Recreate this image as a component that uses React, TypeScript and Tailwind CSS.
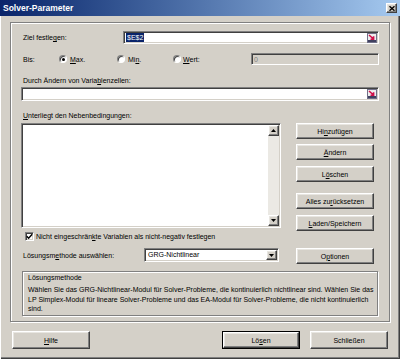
import React from "react";

const sunken =
  "border border-t-[#808080] border-l-[#808080] border-b-white border-r-white shadow-[inset_1px_1px_0_#404040,inset_-1px_-1px_0_#d4d0c8]";
const raised =
  "border border-t-white border-l-white border-b-[#404040] border-r-[#404040] shadow-[inset_-1px_-1px_0_#808080,inset_1px_1px_0_#e8e6e1]";

function RefIcon() {
  return (
    <svg width="10" height="10" viewBox="0 0 10 10" className="shrink-0">
      <rect x="0.5" y="0.5" width="9" height="9" fill="#eeeeee" stroke="#707088" />
      <rect x="1" y="7" width="8" height="2" fill="#404060" />
      <path d="M2 2 L6.5 6 M3.5 6.2 L6.6 6.2 L6.6 3.2" stroke="#d0104a" strokeWidth="1.6" fill="none" />
    </svg>
  );
}

function Radio({ on }: { on?: boolean }) {
  return (
    <div className="w-[8px] h-[8px] rounded-full bg-white border border-t-[#808080] border-l-[#808080] border-b-white border-r-white shadow-[inset_1px_1px_0_#404040] flex items-center justify-center shrink-0">
      {on && <div className="w-[3px] h-[3px] rounded-full bg-black" />}
    </div>
  );
}

function Btn({ children, cls }: { children: React.ReactNode; cls: string }) {
  return (
    <div className={`${cls} bg-[#d4d0c8] ${raised} flex items-center justify-center leading-[9px]`}>
      {children}
    </div>
  );
}

function Arrow({ up }: { up?: boolean }) {
  return (
    <svg width="5" height="3" viewBox="0 0 5 3">
      <path d={up ? "M0 3 L2.5 0 L5 3 Z" : "M0 0 L5 0 L2.5 3 Z"} fill="#000" />
    </svg>
  );
}

export default function App() {
  return (
    <div className="w-[400px] h-[359px] bg-[#d4d0c8] flex flex-col overflow-hidden text-[7px] text-black font-['Liberation_Sans',Arial,sans-serif] shadow-[inset_1px_0_0_#fff,inset_-1px_-1px_0_#404040,inset_-2px_-2px_0_#808080]">
      {/* title bar */}
      <div className="h-[16px] shrink-0 flex items-center justify-between pl-[3px] pr-[3px] bg-linear-to-r from-[#0a246a] to-[#a6caf0]">
        <span className="text-white font-bold text-[8.5px] leading-[10px]">Solver-Parameter</span>
        <div className={`w-[11px] h-[10px] bg-[#d4d0c8] ${raised} flex items-center justify-center`}>
          <svg width="6" height="5" viewBox="0 0 6 5">
            <path d="M0.5 0.3 L5.5 4.7 M5.5 0.3 L0.5 4.7" stroke="#000" strokeWidth="1.4" />
          </svg>
        </div>
      </div>

      <div className="flex-1 flex flex-col px-[10px] pt-[6px]">
        {/* main frame */}
        <div className="h-[300px] shrink-0 border border-[#808080] shadow-[inset_1px_1px_0_#fff,1px_1px_0_#fff] flex flex-col px-[10px]">
          {/* Ziel */}
          <div className="mt-[8px] h-[13px] flex items-center">
            <span className="w-[102px] pl-[2px] leading-[9px]">
              Ziel festle<u>g</u>en:
            </span>
            <div className={`flex-1 h-[13px] bg-white ${sunken} flex items-center justify-between pl-[2px] pr-[1px]`}>
              <span className="bg-[#0a246a] text-white leading-[9px] px-[1px]">$E$2</span>
              <RefIcon />
            </div>
          </div>

          {/* Bis */}
          <div className="mt-[9px] h-[12px] flex items-center">
            <span className="w-[38px] pl-[2px] leading-[9px]">Bis:</span>
            <div className="w-[58px] flex items-center gap-[3px]">
              <Radio on />
              <span className="leading-[9px]">
                <u>M</u>ax.
              </span>
            </div>
            <div className="w-[56px] flex items-center gap-[3px]">
              <Radio />
              <span className="leading-[9px]">
                Mi<u>n</u>.
              </span>
            </div>
            <div className="w-[78px] flex items-center gap-[2px]">
              <Radio />
              <span className="leading-[9px]">
                <u>W</u>ert:
              </span>
            </div>
            <div className={`flex-1 h-[12px] bg-[#d4d0c8] ${sunken} flex items-center pl-[2px] text-[#808080] leading-[9px]`}>0</div>
          </div>

          {/* Durch Ändern */}
          <div className="mt-[11px] h-[9px] pl-[2px] leading-[9px]">
            Durch Ändern von Varia<u>b</u>lenzellen:
          </div>
          <div className={`mt-[2px] h-[14px] bg-white ${sunken} flex items-center justify-end pr-[1px]`}>
            <RefIcon />
          </div>

          {/* Unterliegt */}
          <div className="mt-[10px] h-[9px] pl-[2px] leading-[9px]">
            <u>U</u>nterliegt den Nebenbedingungen:
          </div>
          <div className="mt-[3px] h-[108px] flex items-start">
            <div className={`w-[260px] h-[105px] bg-white ${sunken} p-[1px] flex`}>
              <div className="flex-1" />
              <div className="w-[11px] flex flex-col">
                <div className={`h-[11px] bg-[#d4d0c8] ${raised} flex items-center justify-center`}>
                  <Arrow up />
                </div>
                <div className="flex-1 bg-[#ebe9e4]" />
                <div className={`h-[11px] bg-[#d4d0c8] ${raised} flex items-center justify-center`}>
                  <Arrow />
                </div>
              </div>
            </div>
            <div className="ml-[15px] w-[78px] flex flex-col">
              <Btn cls="h-[16px]">
                <span>
                  Hi<u>n</u>zufügen
                </span>
              </Btn>
              <Btn cls="h-[16px] mt-[5px]">
                <span>
                  <u>Ä</u>ndern
                </span>
              </Btn>
              <Btn cls="h-[16px] mt-[6px]">
                <span>
                  L<u>ö</u>schen
                </span>
              </Btn>
              <Btn cls="h-[16px] mt-[11px]">
                <span>
                  Alles zu<u>r</u>ücksetzen
                </span>
              </Btn>
              <Btn cls="h-[16px] mt-[6px]">
                <span>
                  <u>L</u>aden/Speichern
                </span>
              </Btn>
            </div>
          </div>

          {/* checkbox */}
          <div className="h-[10px] flex items-center">
            <div className={`ml-[4px] w-[9px] h-[9px] bg-white ${sunken} flex items-center justify-center`}>
              <svg width="7" height="7" viewBox="0 0 7 7">
                <path d="M0.8 3.3 L2.6 5.2 L6.2 1.2" stroke="#000" strokeWidth="1.4" fill="none" />
              </svg>
            </div>
            <span className="ml-[2px] leading-[9px]">
              Nicht eingeschrän<u>k</u>te Variablen als nicht-negativ festlegen
            </span>
          </div>

          {/* Lösungsmethode row */}
          <div className="mt-[7px] h-[16px] flex items-start">
            <span className="w-[123px] pl-[2px] mt-[3px] leading-[9px]">
              Lösungsm<u>e</u>thode auswählen:
            </span>
            <div className={`w-[135px] h-[14px] bg-white ${sunken} p-[1px] flex`}>
              <span className="flex-1 pl-[2px] leading-[10px] flex items-center">GRG-Nichtlinear</span>
              <div className={`w-[11px] bg-[#d4d0c8] ${raised} flex items-center justify-center`}>
                <Arrow />
              </div>
            </div>
            <Btn cls="ml-[17px] w-[78px] h-[16px]">
              <span>
                O<u>p</u>tionen
              </span>
            </Btn>
          </div>

          {/* group box */}
          <div className="mt-[7px] mx-[1px] h-[45px] border border-[#808080] shadow-[inset_1px_1px_0_#fff,1px_1px_0_#fff] pl-[5px] pt-[1px]">
            <div className="leading-[9px]">Lösungsmethode</div>
            <div className="mt-[3px] leading-[9.5px] whitespace-nowrap">
              Wählen Sie das GRG-Nichtlinear-Modul für Solver-Probleme, die kontinuierlich nichtlinear sind. Wählen Sie das
              <br />
              LP Simplex-Modul für lineare Solver-Probleme und das EA-Modul für Solver-Probleme, die nicht kontinuierlich
              <br />
              sind.
            </div>
          </div>
        </div>

        {/* bottom buttons */}
        <div className="mt-[9px] flex justify-between px-[2px]">
          <Btn cls="w-[78px] h-[18px]">
            <span>
              <u>H</u>ilfe
            </span>
          </Btn>
          <div className="flex gap-[10px]">
            <div className="border border-black">
              <Btn cls="w-[76px] h-[16px]">
                <span>
                  Lö<u>s</u>en
                </span>
              </Btn>
            </div>
            <Btn cls="w-[78px] h-[18px]">
              <span>Schließen</span>
            </Btn>
          </div>
        </div>
      </div>
    </div>
  );
}
